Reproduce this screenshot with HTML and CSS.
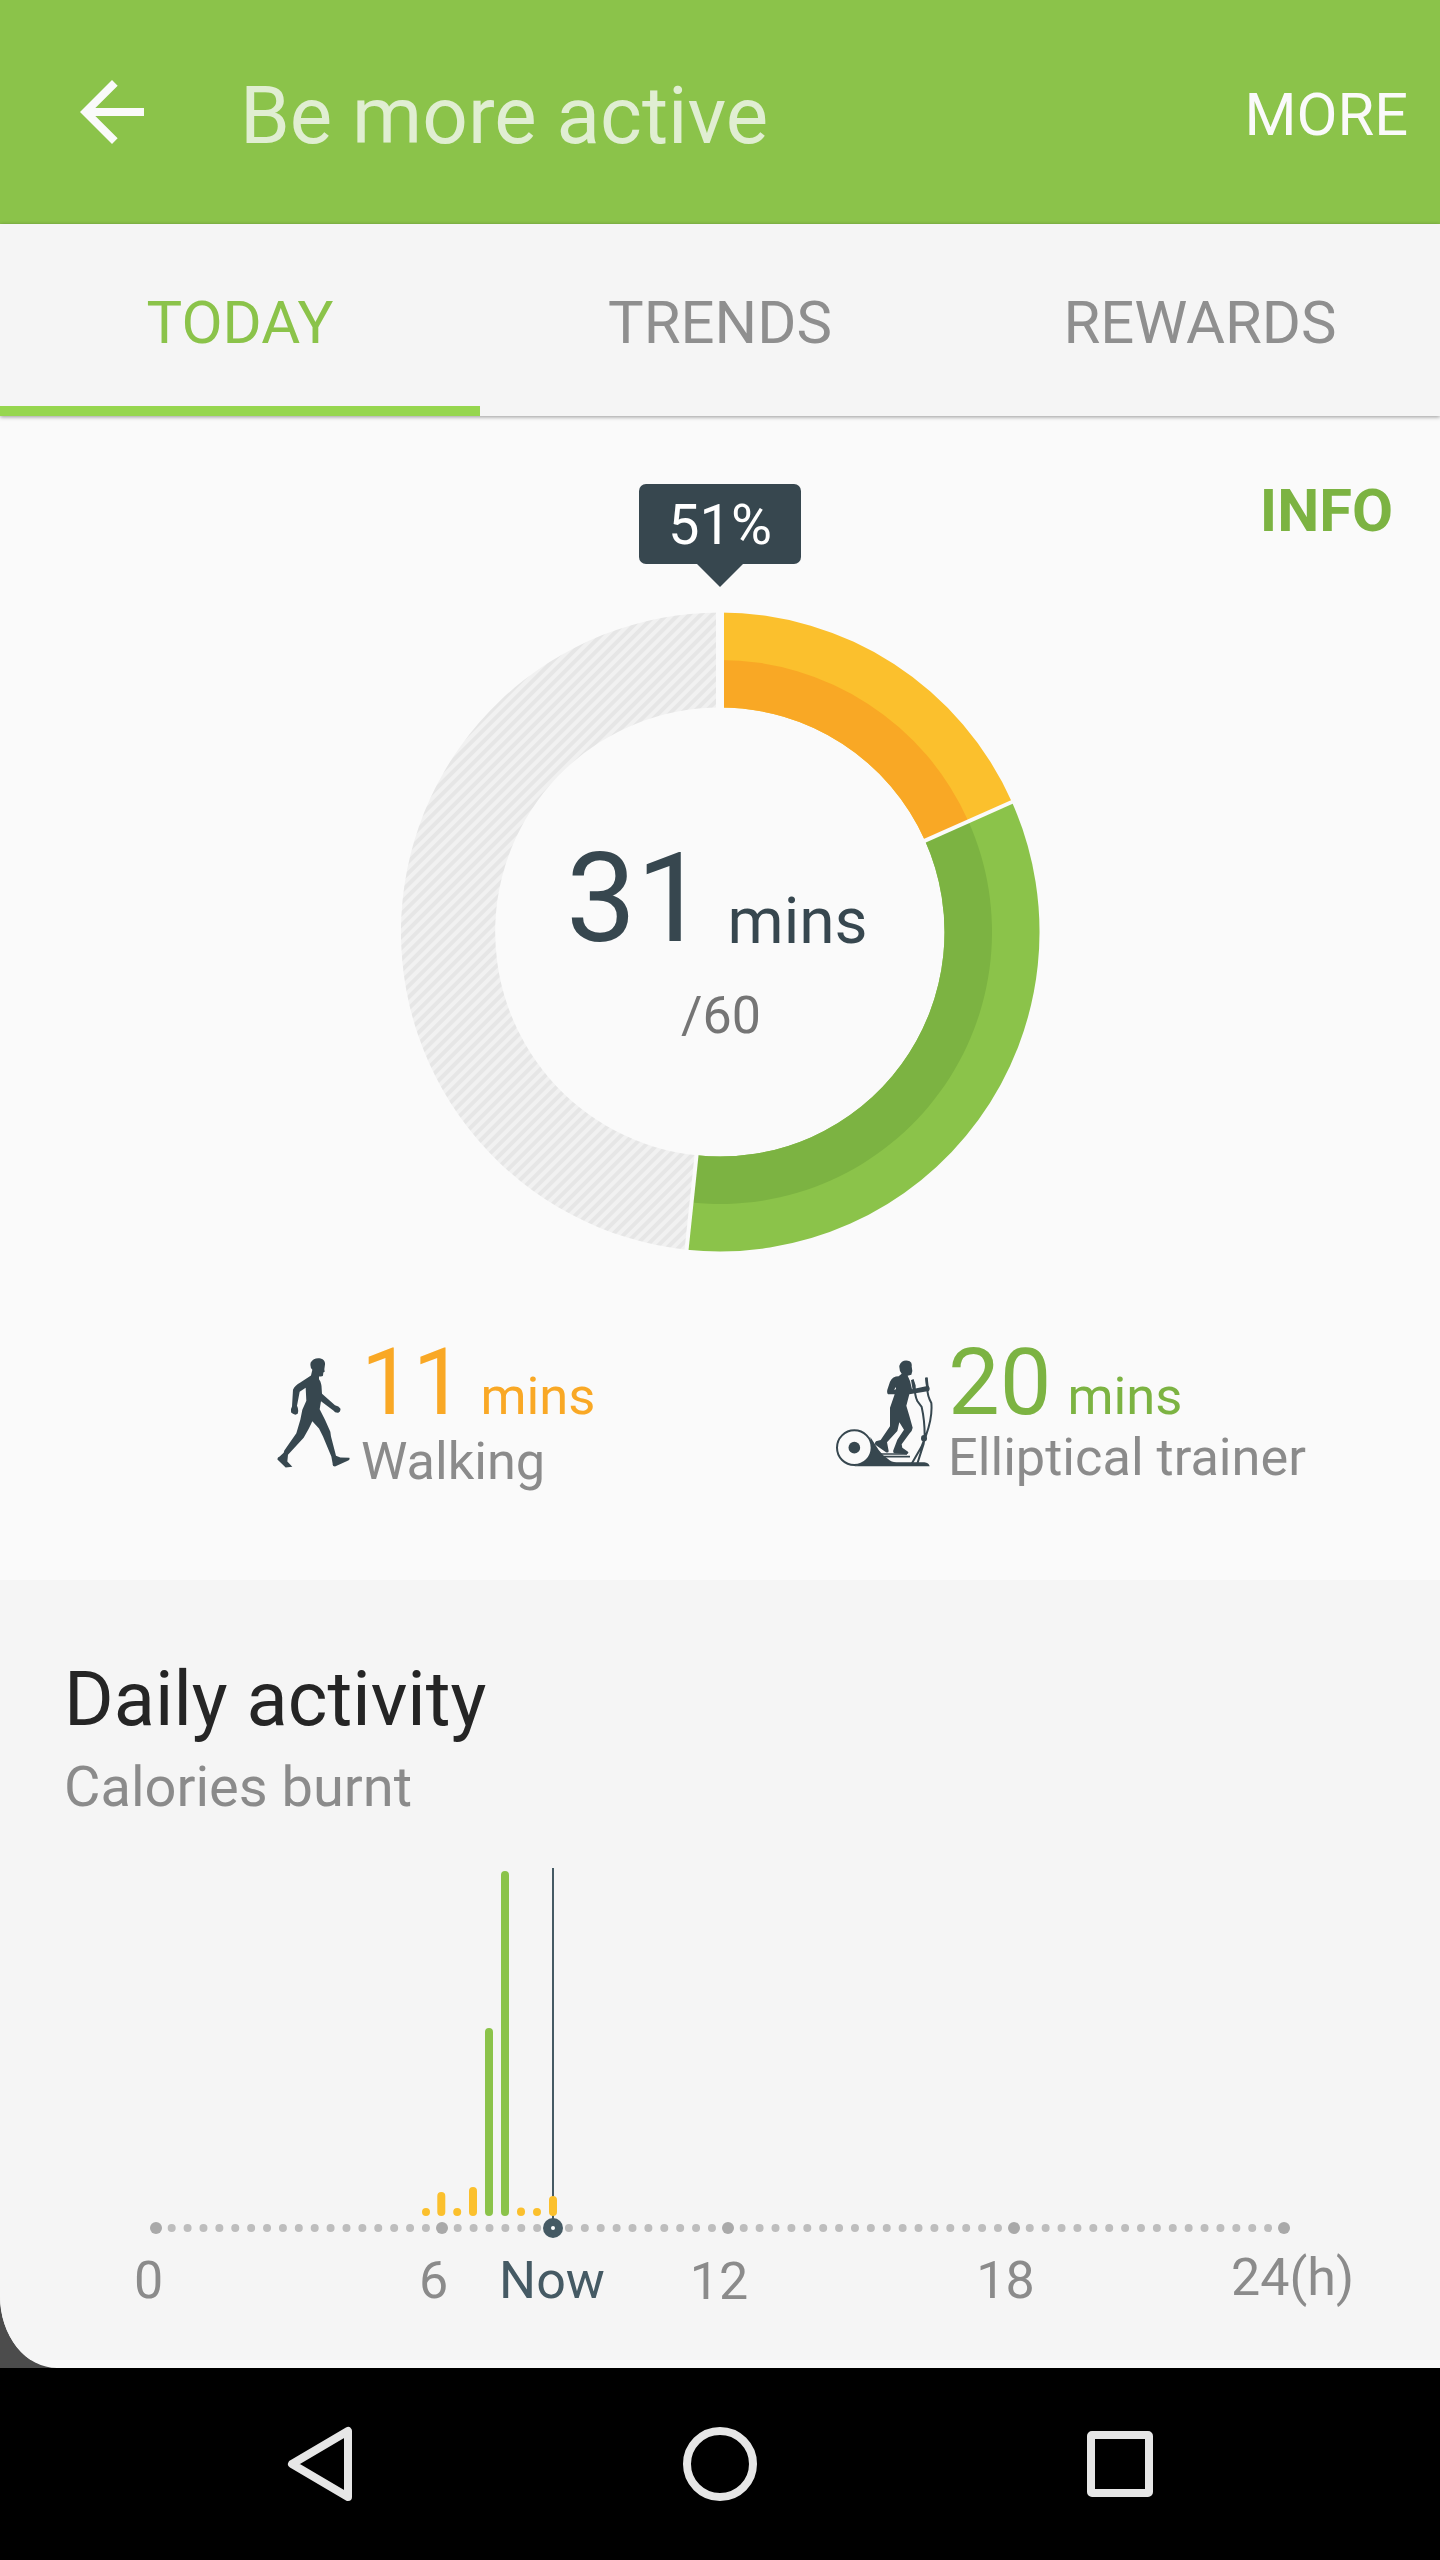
FILE: index.html
```html
<!DOCTYPE html>
<html lang="en">
<head>
    <meta charset="UTF-8">
    <title>Be more active</title>
    <link rel="stylesheet" href="styles.css">
</head>
<body>
    <div class="app">
        <div class="screen">
            <header class="header">
                <svg class="back-icon" viewBox="4 4 16 16"><path d="M20 11H7.83l5.59-5.59L12 4l-8 8 8 8 1.41-1.41L7.83 13H20v-2z"/></svg>
                <h1 class="title">Be more active</h1>
                <span class="more">MORE</span>
            </header>

            <nav class="tabs">
                <span class="tab active">TODAY</span>
                <span class="tab">TRENDS</span>
                <span class="tab">REWARDS</span>
            </nav>

            <section class="summary">
                <div class="summary-top">
                    <div class="badge">51%</div>
                    <span class="info">INFO</span>
                </div>

                <div class="donut">
                    <svg class="donut-ring" viewBox="-320 -320 640 640">
                        <defs>
                            <pattern id="stripes" width="8" height="8" patternUnits="userSpaceOnUse" patternTransform="rotate(45)">
                                <rect width="8" height="8" fill="#f1f1f1"/>
                                <rect width="4" height="8" fill="#e6e6e6"/>
                            </pattern>
                        </defs>
                        <!-- remaining time -->
                        <path d="M-33.4 317.7A319.5 319.5 0 0 1 0 -319.5V-224.5A224.5 224.5 0 0 0 -23.5 223.3Z" fill="url(#stripes)"/>
                        <!-- elliptical trainer -->
                        <path d="M291.9 -130A319.5 319.5 0 0 1 -33.4 317.7L-23.5 223.3A224.5 224.5 0 0 0 205.1 -91.3Z" fill="#8bc34a"/>
                        <path d="M248.5 -110.6A272 272 0 0 1 -28.4 270.5L-23.5 223.3A224.5 224.5 0 0 0 205.1 -91.3Z" fill="#7cb342"/>
                        <!-- walking -->
                        <path d="M0 -319.5A319.5 319.5 0 0 1 291.9 -130L205.1 -91.3A224.5 224.5 0 0 0 0 -224.5Z" fill="#fbc02d"/>
                        <path d="M0 -272A272 272 0 0 1 248.5 -110.6L205.1 -91.3A224.5 224.5 0 0 0 0 -224.5Z" fill="#f9a825"/>
                        <g stroke="#fafafa" stroke-width="4">
                            <path d="M0 -322V-222" stroke-width="8"/>
                            <path d="M294.1 -131L202.8 -90.3"/>
                            <path d="M-33.7 320.2L-23.2 220.8"/>
                        </g>
                    </svg>
                    <div class="donut-text">
                        <div class="total"><span class="total-value">31</span><span class="total-unit">mins</span></div>
                        <div class="goal">/60</div>
                    </div>
                </div>

                <div class="stats">
                    <div class="stat walking">
                        <svg class="walking-icon" viewBox="110 115 219 329"><path d="M211 128C217 116 231 113 241 116C251 118 255 126 254 134L252 148L253 156L249 158L248 168Q246 171 236 170L236 178C242 186 244 196 244 206L245 222L284 256Q296 259 300 266Q302 275 294 279Q284 280 279 272L242 244L238 268L254 300L270 336L272 350L287 408L300 413L327 414Q330 420 322 423L284 440Q276 440 277 432L273 410L248 350L236 326L216 304L206 325L190 354L143 405L141 425L156 441L136 443L112 420Q109 414 118 410L130 399L132 392L168 340L180 300L186 270L198 243L196 204L178 216L170 258Q176 270 172 282Q164 288 153 279Q150 270 155 260L158 210Q164 196 180 188L212 167L216 150Q208 142 211 128Z"/></svg>
                        <div class="stat-text">
                            <div class="stat-main"><span class="stat-value">11</span><span class="stat-unit">mins</span></div>
                            <div class="stat-name">Walking</div>
                        </div>
                    </div>
                    <div class="stat elliptical">
                        <svg class="elliptical-icon" viewBox="78 119 291 321">
                            <path d="M181 350L206 389Q218 406 235 417Q245 427 262 426H343Q357 428 359 438H133Q178 426 186 382Z"/>
                            <circle cx="133" cy="382" r="52" fill="#fafafa" stroke="#37474f" stroke-width="6"/>
                            <circle cx="133" cy="382" r="17.5"/>
                            <path d="M210 401H291M221 409H300" stroke="#37474f" stroke-width="5"/>
                            <path d="M308 178L314 196Q314 226 322 242L335 260Q344 300 344 345L341 370L322 430M349 172L352 206Q352 226 364 248Q368 290 348 345L334 380L305 430" fill="none" stroke="#37474f" stroke-width="6"/>
                            <path d="M307 178L312 208M349 172L353 208" stroke="#37474f" stroke-width="8"/>
                            <ellipse cx="342" cy="354" rx="9" ry="10"/>
                            <path d="M268 136C272 121 288 117 299 123Q307 128 305 138L307 152L304 163L293 166L300 182L306 207L355 196Q362 204 357 212L298 222L289 256L299 290L308 322Q307 332 298 340L275 372L277 382L294 394Q298 400 288 402L254 399Q248 397 250 390L262 358L282 328L268 306L262 332L231 366L236 392Q236 398 228 396L198 375Q191 370 198 363L212 359L240 318L240 262L254 222L234 222Q230 218 232 208L240 184Q248 168 266 168L275 160Q267 150 268 136Z"/>
                            <path d="M252 208L258 200V207Z" fill="#fafafa"/>
                        </svg>
                        <div class="stat-text">
                            <div class="stat-main"><span class="stat-value">20</span><span class="stat-unit">mins</span></div>
                            <div class="stat-name">Elliptical trainer</div>
                        </div>
                    </div>
                </div>
            </section>

            <section class="daily">
                <h2 class="daily-title">Daily activity</h2>
                <p class="daily-subtitle">Calories burnt</p>
                <svg class="chart" viewBox="0 1860 1440 500">
                    <path d="M553 1868V2228" stroke="#455a64" stroke-width="2"/>
                    <g stroke="#fbc02d" stroke-width="8" stroke-linecap="round">
                        <path d="M426 2212v.1M441.3 2196V2212M457.2 2212v.1M473 2191V2212M521 2211.5V2212M537 2212v.1M553 2200V2212"/>
                        <path d="M489 2032V2212M505 1875V2212" stroke="#8bc34a"/>
                    </g>
                    <!-- one dot for every 20 minutes -->
                    <path d="M155.8 2228H1270" stroke="#bdbdbd" stroke-width="8" stroke-linecap="round" stroke-dasharray="0 15.89"/>
                    <g fill="#a9a9a9">
                        <circle cx="156" cy="2228" r="6"/>
                        <circle cx="442" cy="2228" r="6"/>
                        <circle cx="728" cy="2228" r="6"/>
                        <circle cx="1014" cy="2228" r="6"/>
                        <circle cx="1284" cy="2228" r="6"/>
                    </g>
                    <circle cx="553" cy="2228" r="10" fill="#455a64"/>
                    <circle cx="553" cy="2228" r="2" fill="#fff"/>
                    <g class="axis-labels">
                        <text x="148.5" y="2298">0</text>
                        <text x="433.5" y="2298">6</text>
                        <text class="now" x="552" y="2297.5">Now</text>
                        <text x="719" y="2298.5">12</text>
                        <text x="1005.5" y="2297.5">18</text>
                        <text x="1292.5" y="2295">24(h)</text>
                    </g>
                </svg>
            </section>
        </div>

        <footer class="navbar">
            <svg viewBox="0 0 80 80"><path d="M68 7V73L12 40Z"/></svg>
            <svg viewBox="0 0 80 80"><circle cx="40" cy="40" r="33"/></svg>
            <svg viewBox="0 0 80 80"><rect x="11" y="11" width="58" height="58" rx="1"/></svg>
        </footer>
    </div>
</body>
</html>
```
FILE: styles.css
```css
body {
    font-family: Roboto, sans-serif;
    margin: 0;
    color: #37474f;
}

h1, h2, p {
    margin: 0;
    font-weight: 400;
}

svg {
    display: block;
    flex: none;
}

.app {
    width: 1440px;
    height: 2560px;
    background-color: #4c4c4c;
    overflow: hidden;
}

.screen {
    height: 2368px;
    background-color: #fafafa;
    border-bottom-left-radius: 57px 72px;
    overflow: hidden;
}

.header {
    display: flex;
    align-items: center;
    box-sizing: border-box;
    height: 224px;
    padding: 0 32px 0 80px;
    background-color: #8bc34a;
}

.back-icon {
    width: 64px;
    height: 64px;
    fill: #fafafa;
}

.title {
    flex: 1;
    margin-left: 96px;
    padding-top: 7px;
    font-size: 80px;
    line-height: 80px;
    color: #e0eed2;
}

.more {
    padding-top: 5px;
    font-size: 59.6px;
    line-height: 60px;
    color: #fafafa;
}

.tabs {
    position: relative;
    display: grid;
    grid-template-columns: repeat(3, 1fr);
    height: 192px;
    background-color: #f5f5f5;
    box-shadow: 0 1px 4px rgba(0, 0, 0, 0.4);
}

.tab {
    box-sizing: border-box;
    height: 192px;
    font-size: 59.8px;
    line-height: 198px;
    text-align: center;
    color: #8f8f8f;
}

.tab.active {
    color: #8bc34a;
    border-bottom: 10px solid #96d64f;
}

.summary {
    box-sizing: border-box;
    height: 1164px;
    padding-top: 68px;
}

.summary-top {
    display: grid;
    grid-template-columns: 1fr auto 1fr;
    height: 104px;
    margin-bottom: 24px;
}

.badge {
    position: relative;
    grid-column: 2;
    width: 162px;
    height: 80px;
    border-radius: 7px;
    background-color: #37474f;
    color: #fff;
    font-size: 56px;
    line-height: 82px;
    text-align: center;
}

.badge::after {
    content: "";
    position: absolute;
    top: 79px;
    left: 57px;
    border: 24px solid transparent;
    border-top-color: #37474f;
    border-bottom: none;
}

.info {
    justify-self: end;
    margin-right: 47px;
    font-size: 59.6px;
    font-weight: 700;
    line-height: 54px;
    color: #7cb342;
}

.donut {
    display: grid;
    width: 640px;
    height: 640px;
    margin: 0 auto;
}

.donut-ring,
.donut-text {
    grid-area: 1 / 1;
}

.donut-text {
    padding-top: 224px;
}

.total {
    display: flex;
    align-items: baseline;
    height: 125px;
    padding-left: 166px;
    line-height: 125px;
}

.total-value {
    font-size: 125px;
}

.total-unit {
    position: relative;
    top: 2px;
    margin-left: 21px;
    font-size: 64px;
}

.goal {
    margin-top: 25px;
    padding-left: 2px;
    font-size: 52px;
    line-height: 60px;
    text-align: center;
    color: #757575;
}

.stats {
    display: grid;
    grid-template-columns: 559px 1fr;
    padding: 85px 0 0 277px;
}

.stat {
    display: flex;
    align-items: flex-start;
}

.walking-icon {
    width: 73px;
    height: 110px;
    margin: 21px 11px 0 0;
    fill: #37474f;
}

.elliptical-icon {
    width: 97px;
    height: 107px;
    margin: 23px 15px 0 0;
    fill: #37474f;
}

.stat-main {
    display: flex;
    align-items: baseline;
    height: 92px;
    line-height: 92px;
}

.stat-value {
    font-size: 92px;
}

.stat-unit {
    margin-left: 16px;
    font-size: 52.5px;
}

.walking .stat-main {
    color: #f9a825;
}

.elliptical .stat-main {
    color: #7cb342;
}

.stat-name {
    margin-top: 2px;
    font-size: 52.3px;
    line-height: 60px;
    color: #8b8b8b;
}

.elliptical .stat-name {
    margin-top: -2px;
}

.daily {
    box-sizing: border-box;
    height: 780px;
    padding-top: 76px;
    background-color: #f5f5f5;
}

.daily-title {
    padding-left: 64px;
    font-size: 75.8px;
    line-height: 88px;
    color: #252525;
}

.daily-subtitle {
    margin: 10px 0 40px;
    padding-left: 64px;
    font-size: 56px;
    line-height: 66px;
    color: #8b8b8b;
}

.chart {
    width: 1440px;
    height: 500px;
}

.axis-labels {
    font-size: 52px;
    text-anchor: middle;
    fill: #8b8b8b;
}

.axis-labels .now {
    fill: #455a64;
}

.navbar {
    display: flex;
    justify-content: center;
    align-items: center;
    gap: 320px;
    height: 192px;
    background-color: #000;
}

.navbar svg {
    width: 80px;
    height: 80px;
    fill: none;
    stroke: #e6e6e6;
    stroke-width: 8;
    stroke-linejoin: round;
}
```
